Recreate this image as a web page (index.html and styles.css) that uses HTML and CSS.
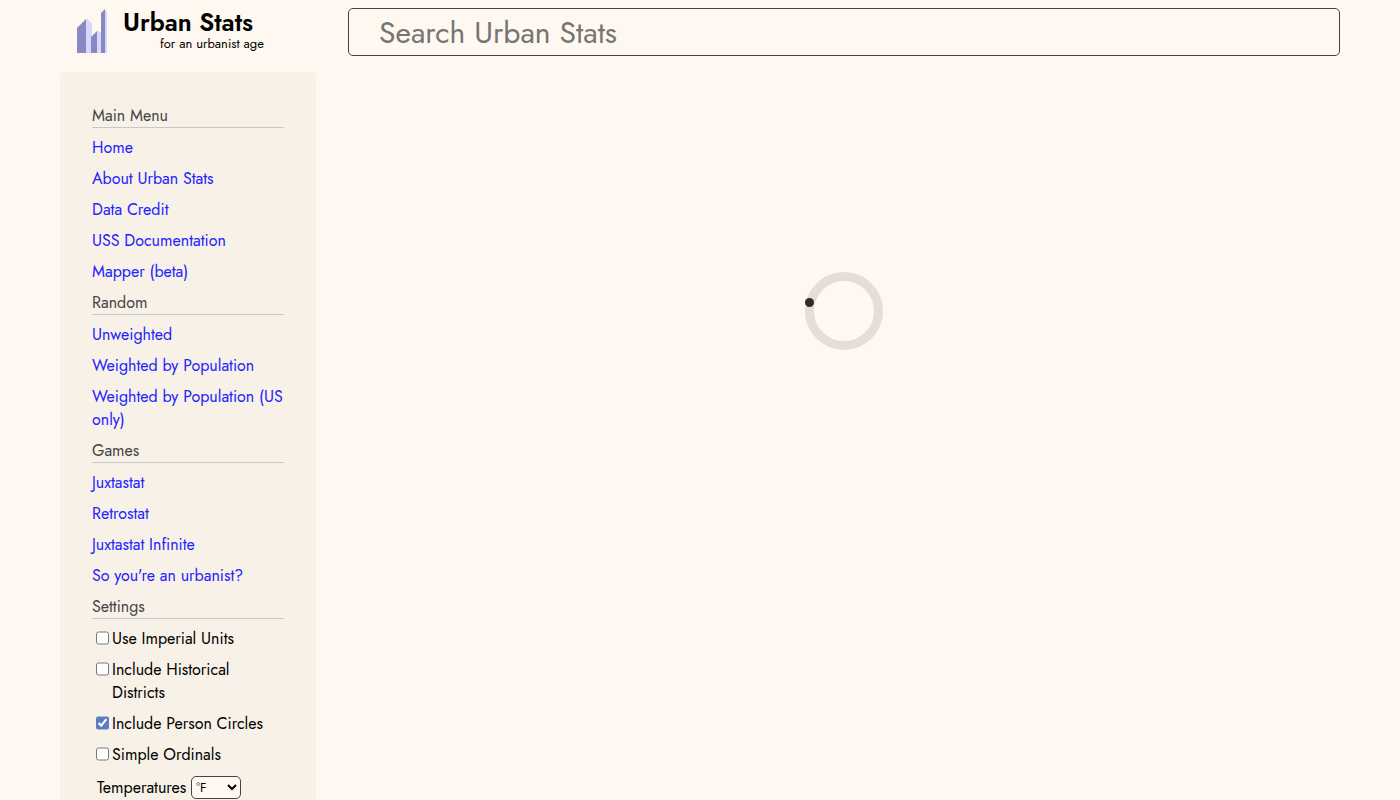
FILE: index.html
```html
<!DOCTYPE html>
<html lang="en">
<head>
<meta charset="utf-8">
<meta name="viewport" content="width=device-width, initial-scale=1">
<title>Urban Stats</title>
<link rel="stylesheet" href="styles.css">
</head>
<body>
<div class="page">
  <header class="header">
    <a class="logo" href="#home">
      <svg class="logo-mark" viewBox="0 0 32 45" aria-hidden="true">
        <path fill="#d8d8ff" d="M9 9L15 14V44H9zM20 21L24 24V44H20zM28 0L30 3V44H28z"/>
        <path fill="#8a88c2" d="M0 19L9 10V44H0zM14 28L20 22V44H14zM24 4L28 0V44H24z"/>
      </svg>
      <span class="logo-text">
        <span class="logo-name">Urban Stats</span>
        <span class="logo-tagline">for an urbanist age</span>
      </span>
    </a>
    <input class="search" type="text" placeholder="Search Urban Stats" aria-label="Search Urban Stats">
  </header>
  <div class="body">
    <nav class="sidebar">
      <h2 class="section-title">Main Menu</h2>
      <ul class="links">
        <li><a href="#home">Home</a></li>
        <li><a href="#about">About Urban Stats</a></li>
        <li><a href="#credit">Data Credit</a></li>
        <li><a href="#uss">USS Documentation</a></li>
        <li><a href="#mapper">Mapper (beta)</a></li>
      </ul>
      <h2 class="section-title">Random</h2>
      <ul class="links">
        <li><a href="#unweighted">Unweighted</a></li>
        <li><a href="#population">Weighted by Population</a></li>
        <li><a href="#population-us">Weighted by Population (US only)</a></li>
      </ul>
      <h2 class="section-title">Games</h2>
      <ul class="links">
        <li><a href="#juxtastat">Juxtastat</a></li>
        <li><a href="#retrostat">Retrostat</a></li>
        <li><a href="#infinite">Juxtastat Infinite</a></li>
        <li><a href="#urbanist">So you're an urbanist?</a></li>
      </ul>
      <h2 class="section-title">Settings</h2>
      <div class="setting"><input type="checkbox" id="imperial"><label for="imperial">Use Imperial Units</label></div>
      <div class="setting"><input type="checkbox" id="historical"><label for="historical">Include Historical Districts</label></div>
      <div class="setting"><input type="checkbox" id="circles" checked><label for="circles">Include Person Circles</label></div>
      <div class="setting"><input type="checkbox" id="ordinals"><label for="ordinals">Simple Ordinals</label></div>
      <div class="setting-select">
        <label for="temperature">Temperatures</label>
        <select id="temperature"><option>°F</option><option>°C</option></select>
      </div>
    </nav>
    <main class="content">
      <svg class="spinner" viewBox="0 0 78 78" role="img" aria-label="Loading">
        <circle cx="39" cy="39" r="34.5" fill="none" stroke="#e6ddd8" stroke-width="9"/>
        <circle cx="4.5" cy="30.5" r="4.5" fill="#2b2b2b"/>
      </svg>
    </main>
  </div>
</div>
</body>
</html>
```
FILE: styles.css
```css
* {
  box-sizing: border-box;
}

body {
  margin: 0;
  background: #fff8f0;
  color: #000;
  font-family: Jost, Lato, sans-serif;
  font-size: 16px;
  line-height: 23px;
}

.page {
  max-width: 1280px;
  margin: 0 auto;
  padding-top: 8px;
}

.header,
.body {
  display: grid;
  grid-template-columns: 256px 1fr;
  column-gap: 32px;
}

.body {
  margin-top: 16px;
}

.logo {
  display: flex;
  gap: 14px;
  padding: 1px 0 0 17px;
  color: #000;
  text-decoration: none;
}

.logo-mark {
  width: 32px;
  height: 45px;
}

.logo-text {
  display: flex;
  flex-direction: column;
}

.logo-name {
  font-size: 25px;
  font-weight: 600;
  line-height: 27px;
}

.logo-tagline {
  padding-left: 37px;
  font-size: 13px;
  line-height: 15px;
}

.search {
  width: 100%;
  height: 48px;
  padding: 0 30px;
  border: 1px solid #444;
  border-radius: 5px;
  background: #fff8f0;
  font-family: inherit;
  font-size: 30px;
}

.search::placeholder {
  color: #757575;
}

.sidebar {
  display: flex;
  flex-direction: column;
  gap: 8px;
  padding: 32px;
  border-radius: 5px;
  background: #f7f1e8;
}

.section-title {
  margin: 0;
  border-bottom: 1px solid #c8c8cc;
  color: #444;
  font-size: 16px;
  font-weight: 400;
}

.links {
  display: flex;
  flex-direction: column;
  gap: 8px;
  margin: 0;
  padding: 0;
  list-style: none;
}

.links a {
  color: #2222ff;
  text-decoration: none;
}

.setting {
  display: flex;
  align-items: flex-start;
  gap: 3px;
  padding-left: 4px;
}

.setting input {
  flex: none;
  width: 13px;
  height: 14px;
  margin: 4px 0 0;
  accent-color: #5a7dc3;
}

.setting-select {
  display: flex;
  align-items: center;
  gap: 5px;
  padding: 2px 0 0 5px;
}

.setting-select select {
  width: 50px;
  height: 23px;
  border: 1px solid #444;
  border-radius: 5px;
  background: #fff8f0;
  color: #000;
  font-family: inherit;
  font-size: 13px;
}

.content {
  display: flex;
  justify-content: center;
  align-items: flex-start;
  padding-top: 200px;
}

.spinner {
  width: 78px;
  height: 78px;
}
```
